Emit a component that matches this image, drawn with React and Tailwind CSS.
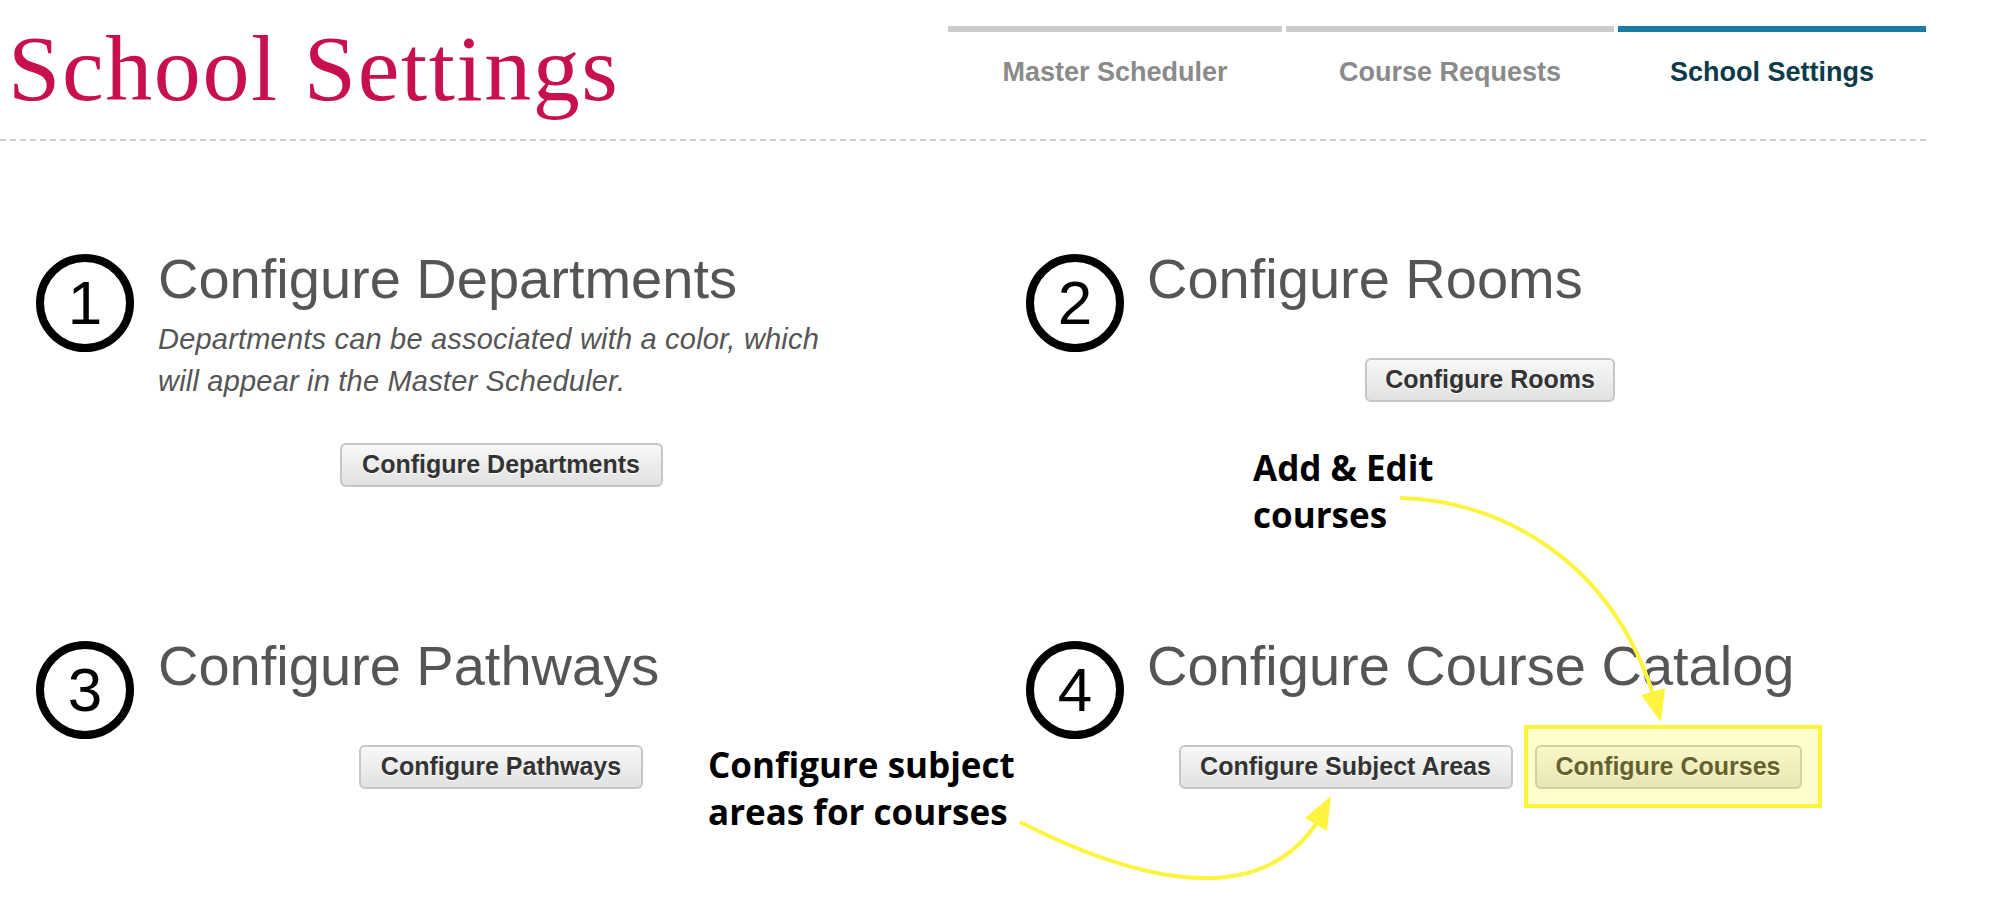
import React from "react";

const Circle = ({ n }) => (
  <div className="mt-[7px] flex h-[98px] w-[98px] shrink-0 items-center justify-center rounded-full border-[8px] border-black font-['Liberation_Sans',sans-serif] text-[62px] leading-none text-black">
    {n}
  </div>
);

const Btn = ({ w, children }) => (
  <button
    className={`${w} h-[44px] rounded-[6px] border-2 border-[#c6c6c6] bg-linear-to-b from-[#f8f8f8] to-[#e1e1e1] text-center font-['Liberation_Sans',sans-serif] text-[25px] font-bold text-[#333] [text-shadow:0_1px_0_#fff]`}
  >
    {children}
  </button>
);

const Heading = ({ children }) => (
  <h2 className="font-['Liberation_Sans',sans-serif] text-[56px] leading-[64px] text-[#555]">
    {children}
  </h2>
);

export default function App() {
  return (
    <div className="relative h-[898px] w-[1990px] overflow-hidden bg-white">
      <div className="w-[1926px]">
        <header className="flex h-[141px] items-start justify-between border-b-2 border-dashed border-[#cfcfcf]">
          <h1 className="pl-[8px] pt-[21px] font-['Liberation_Serif',serif] text-[94px] leading-none tracking-[1.6px] text-[#c8104e]">
            School Settings
          </h1>
          <nav className="flex gap-[4px] pt-[26px] font-['Liberation_Sans',sans-serif] text-[27px] font-bold leading-[32px]">
            <div className="w-[334px] border-t-[6px] border-[#cccccc] pt-[24px] text-center text-[#8a8a8a]">
              Master Scheduler
            </div>
            <div className="w-[328px] border-t-[6px] border-[#cccccc] pt-[24px] text-center text-[#8a8a8a]">
              Course Requests
            </div>
            <div className="w-[308px] border-t-[6px] border-[#1a7ca1] pt-[24px] text-center text-[#0b3a4a]">
              School Settings
            </div>
          </nav>
        </header>

        <main className="grid grid-cols-[990px_900px] gap-y-[147px] pl-[36px] pt-[106px]">
          <section className="flex items-start gap-[24px]">
            <Circle n="1" />
            <div className="w-[686px]">
              <Heading>Configure Departments</Heading>
              <p className="mt-[7px] w-[680px] font-['Liberation_Sans',sans-serif] text-[29px] italic leading-[42px] tracking-[0.2px] text-[#555]">
                Departments can be associated with a color, which will appear in the Master Scheduler.
              </p>
              <div className="mt-[41px] flex justify-center">
                <Btn w="w-[323px]">Configure Departments</Btn>
              </div>
            </div>
          </section>

          <section className="flex items-start gap-[23px]">
            <Circle n="2" />
            <div className="w-[686px]">
              <Heading>Configure Rooms</Heading>
              <div className="mt-[47px] flex justify-center">
                <Btn w="w-[250px]">Configure Rooms</Btn>
              </div>
            </div>
          </section>

          <section className="flex items-start gap-[24px]">
            <Circle n="3" />
            <div className="w-[686px]">
              <Heading>Configure Pathways</Heading>
              <div className="mt-[47px] flex justify-center">
                <Btn w="w-[284px]">Configure Pathways</Btn>
              </div>
            </div>
          </section>

          <section className="flex items-start gap-[23px]">
            <Circle n="4" />
            <div className="w-[686px]">
              <Heading>Configure Course Catalog</Heading>
              <div className="mt-[47px] flex justify-center gap-[22px]">
                <Btn w="w-[334px]">Configure Subject Areas</Btn>
                <Btn w="w-[267px]">Configure Courses</Btn>
              </div>
            </div>
          </section>
        </main>
      </div>

      {/* annotations */}
      <div className="pointer-events-none absolute left-[1524px] top-[725px] h-[83px] w-[298px] border-[4px] border-[#fdf43f] bg-[rgba(255,245,40,0.24)]" />

      <div className="absolute left-[1253px] top-[444px] font-['Open_Sans',sans-serif] text-[35px] font-bold leading-[47px] text-black">
        Add &amp; Edit
        <br />
        courses
      </div>
      <div className="absolute left-[708px] top-[741px] font-['Open_Sans',sans-serif] text-[35px] font-bold leading-[47px] text-black">
        Configure subject
        <br />
        areas for courses
      </div>

      <svg className="pointer-events-none absolute left-0 top-0" width="1990" height="898" viewBox="0 0 1990 898">
        <path d="M1400 498 C1500 500, 1610 560, 1653 694" fill="none" stroke="#fdf43f" strokeWidth="4" />
        <polygon points="1661,722 1665,688 1641,695" fill="#fdf43f" />
        <path d="M1020 822 C1110 868, 1250 920, 1316 824" fill="none" stroke="#fdf43f" strokeWidth="4" />
        <polygon points="1331,796 1327,831 1305,818" fill="#fdf43f" />
      </svg>
    </div>
  );
}
